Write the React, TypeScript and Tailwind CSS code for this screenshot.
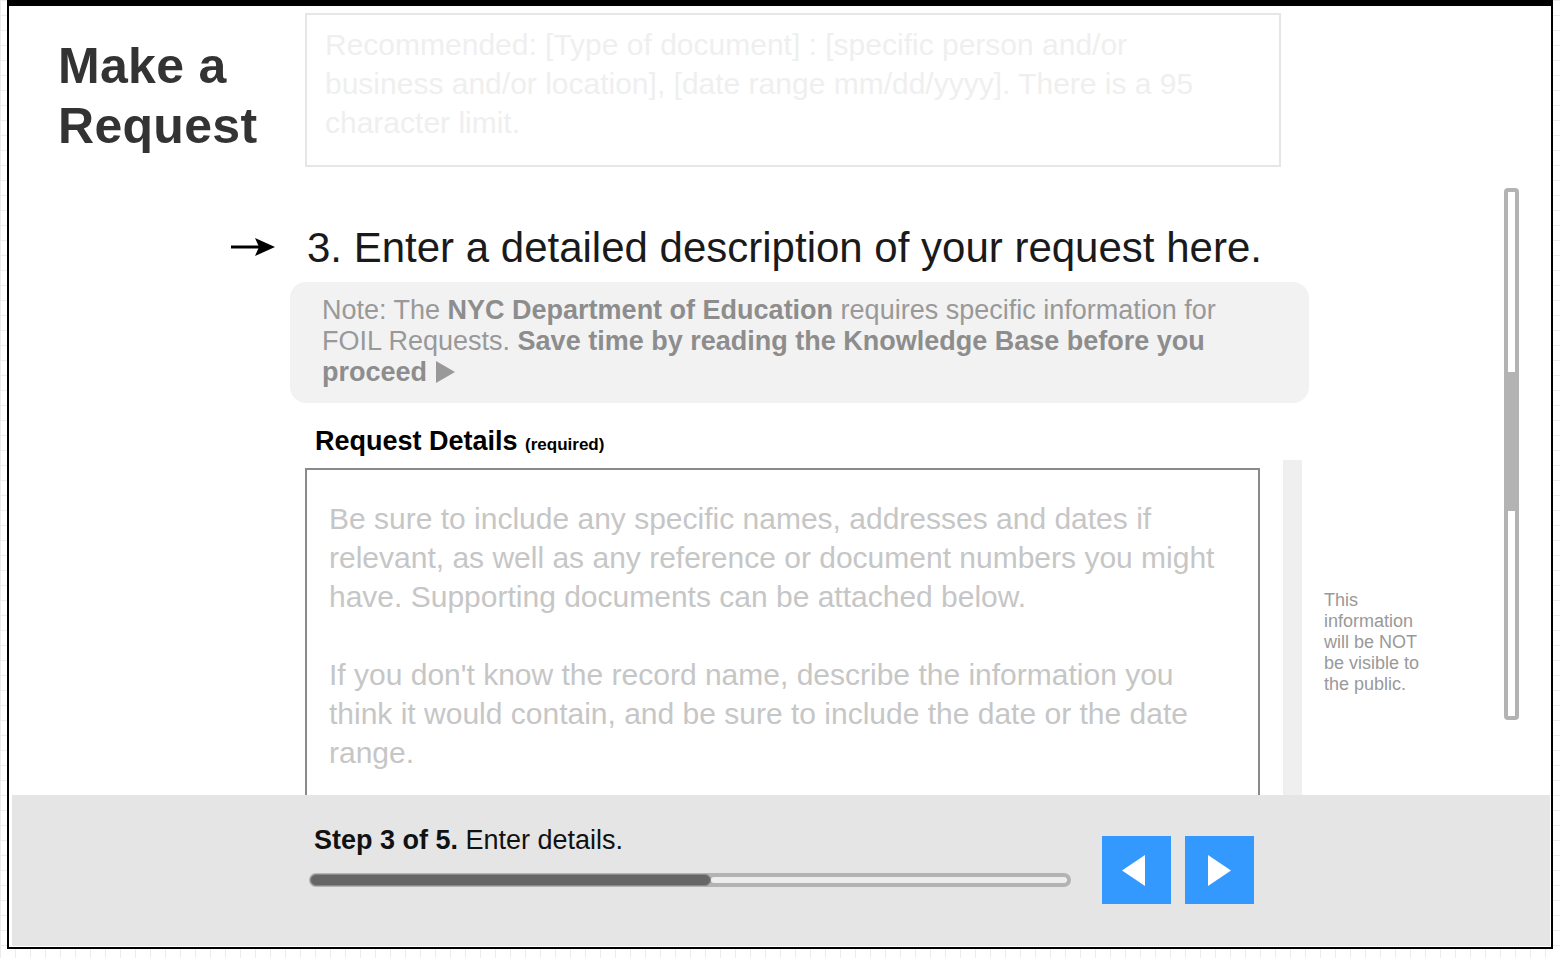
import React from "react";

function ArrowRight() {
  return (
    <svg width="44" height="22" viewBox="0 0 44 22" className="shrink-0">
      <line x1="0" y1="11" x2="32" y2="11" stroke="#000" strokeWidth="3" />
      <path d="M24 2 L44 11 L24 20 L28 11 Z" fill="#000" />
    </svg>
  );
}

export default function App() {
  return (
    <div className="h-[958px] w-full overflow-hidden bg-white [background-image:linear-gradient(to_right,#ececec_1px,transparent_1px),linear-gradient(to_bottom,#ececec_1px,transparent_1px)] [background-size:15px_15px] [font-family:'Liberation_Sans',Arial,Helvetica,sans-serif]">
      <div className="ml-[7px] flex h-[949px] w-[1546px] flex-col border-x-2 border-b-2 border-t-[6px] border-black bg-white">
        {/* content area */}
        <div className="flex h-[789px] overflow-hidden">
          <div className="flex min-w-0 flex-1 flex-col">
            {/* row 1: title + title input */}
            <div className="flex items-start">
              <h1 className="ml-[49px] mt-[30px] w-[247px] shrink-0 text-[50px] font-bold leading-[60px] tracking-[0.3px] text-[#333]">
                Make a
                <br />
                Request
              </h1>
              <div className="mt-[7px] h-[154px] w-[976px] shrink-0 border-2 border-[#e6e6e6] pl-[18px] pr-[54px] pt-[10px] text-[30px] leading-[39px] text-[#efefef]">
                Recommended: [Type of document] : [specific person and/or business and/or location], [date range mm/dd/yyyy]. There is a 95 character limit.
              </div>
            </div>

            {/* row 2: heading */}
            <div className="mt-[57px] flex h-[48px] items-center">
              <div className="ml-[222px] mt-[-3px] flex">
                <ArrowRight />
              </div>
              <h2 className="ml-[32px] whitespace-nowrap text-[42px] leading-[48px] text-[#1a1a1a]">
                3. Enter a detailed description of your request here.
              </h2>
            </div>

            {/* row 3: note */}
            <div className="ml-[281px] mt-[10px] w-[1019px] rounded-[16px] bg-[#f2f2f2] pb-[15px] pl-[32px] pr-[57px] pt-[13px] text-[27px] leading-[31px] text-[#999]">
              Note: The <span className="font-bold text-[#8d8d8d]">NYC Department of Education</span> requires specific information for FOIL Requests.{" "}
              <span className="font-bold text-[#8d8d8d]">
                Save time by reading the Knowledge Base before you proceed
              </span>
              <svg
                width="19"
                height="22"
                viewBox="0 0 19 22"
                className="ml-[9px] inline-block align-[-2px]"
              >
                <path d="M0 0 L19 11 L0 22 Z" fill="#999" />
              </svg>
            </div>

            {/* row 4: label */}
            <div className="ml-[306px] mt-[22px] h-[32px] text-[27px] font-bold leading-[32px] text-black">
              Request Details <span className="text-[17px] leading-none">(required)</span>
            </div>

            {/* row 5: textarea + strip + side note */}
            <div className="mt-[3px] flex items-start">
              <div className="ml-[296px] mt-[8px] h-[400px] w-[955px] shrink-0 border-2 border-[#8a8a8a] pl-[22px] pr-[31px] pt-[29px] text-[30px] leading-[39px] text-[#c6c6c6]">
                <p>
                  Be sure to include any specific names, addresses and dates if relevant, as well as any reference or document numbers you might have. Supporting documents can be attached below.
                </p>
                <p className="mt-[39px]">
                  If you don't know the record name, describe the information you think it would contain, and be sure to include the date or the date range.
                </p>
              </div>
              <div className="ml-[23px] h-[400px] w-[19px] shrink-0 bg-[#efefef]" />
              <div className="ml-[22px] mt-[130px] w-[105px] shrink-0 text-[18px] leading-[21px] text-[#999]">
                This information will be NOT be visible to the public.
              </div>
            </div>
          </div>

          {/* scrollbar */}
          <div className="mr-[32px] mt-[182px] flex h-[532px] w-[15px] shrink-0 flex-col rounded-[4px] border-[4px] border-[#b3b3b3] bg-white">
            <div className="mt-[180px] h-[139px] bg-[#b3b3b3]" />
          </div>
        </div>

        {/* bottom bar */}
        <div className="ml-[3px] mr-[1px] flex h-[151px] items-start bg-[#e5e5e5]">
          <div className="ml-[297px] flex flex-col">
            <div className="pl-[5px] pt-[29px] text-[27px] leading-[32px] text-[#111]">
              <span className="font-bold">Step 3 of 5.</span> Enter details.
            </div>
            <div className="mt-[17px] flex h-[14px] w-[762px] items-center rounded-full bg-[#b3b3b3]">
              <div className="ml-[1px] h-[12px] w-[401px] rounded-full border border-[#8a8a8a] bg-[#666]" />
              <div className="mr-[4px] h-[6px] flex-1 rounded-full bg-[#ededed]" />
            </div>
          </div>
          <div className="ml-[31px] mt-[41px] flex gap-[14px]">
            <div className="flex h-[68px] w-[69px] items-center justify-center bg-[#3399ff]">
              <svg width="23" height="31" viewBox="0 0 23 31" className="mr-[6px]">
                <path d="M23 0 L0 15.5 L23 31 Z" fill="#fff" />
              </svg>
            </div>
            <div className="flex h-[68px] w-[69px] items-center justify-center bg-[#3399ff]">
              <svg width="23" height="31" viewBox="0 0 23 31">
                <path d="M0 0 L23 15.5 L0 31 Z" fill="#fff" />
              </svg>
            </div>
          </div>
        </div>
      </div>
    </div>
  );
}
